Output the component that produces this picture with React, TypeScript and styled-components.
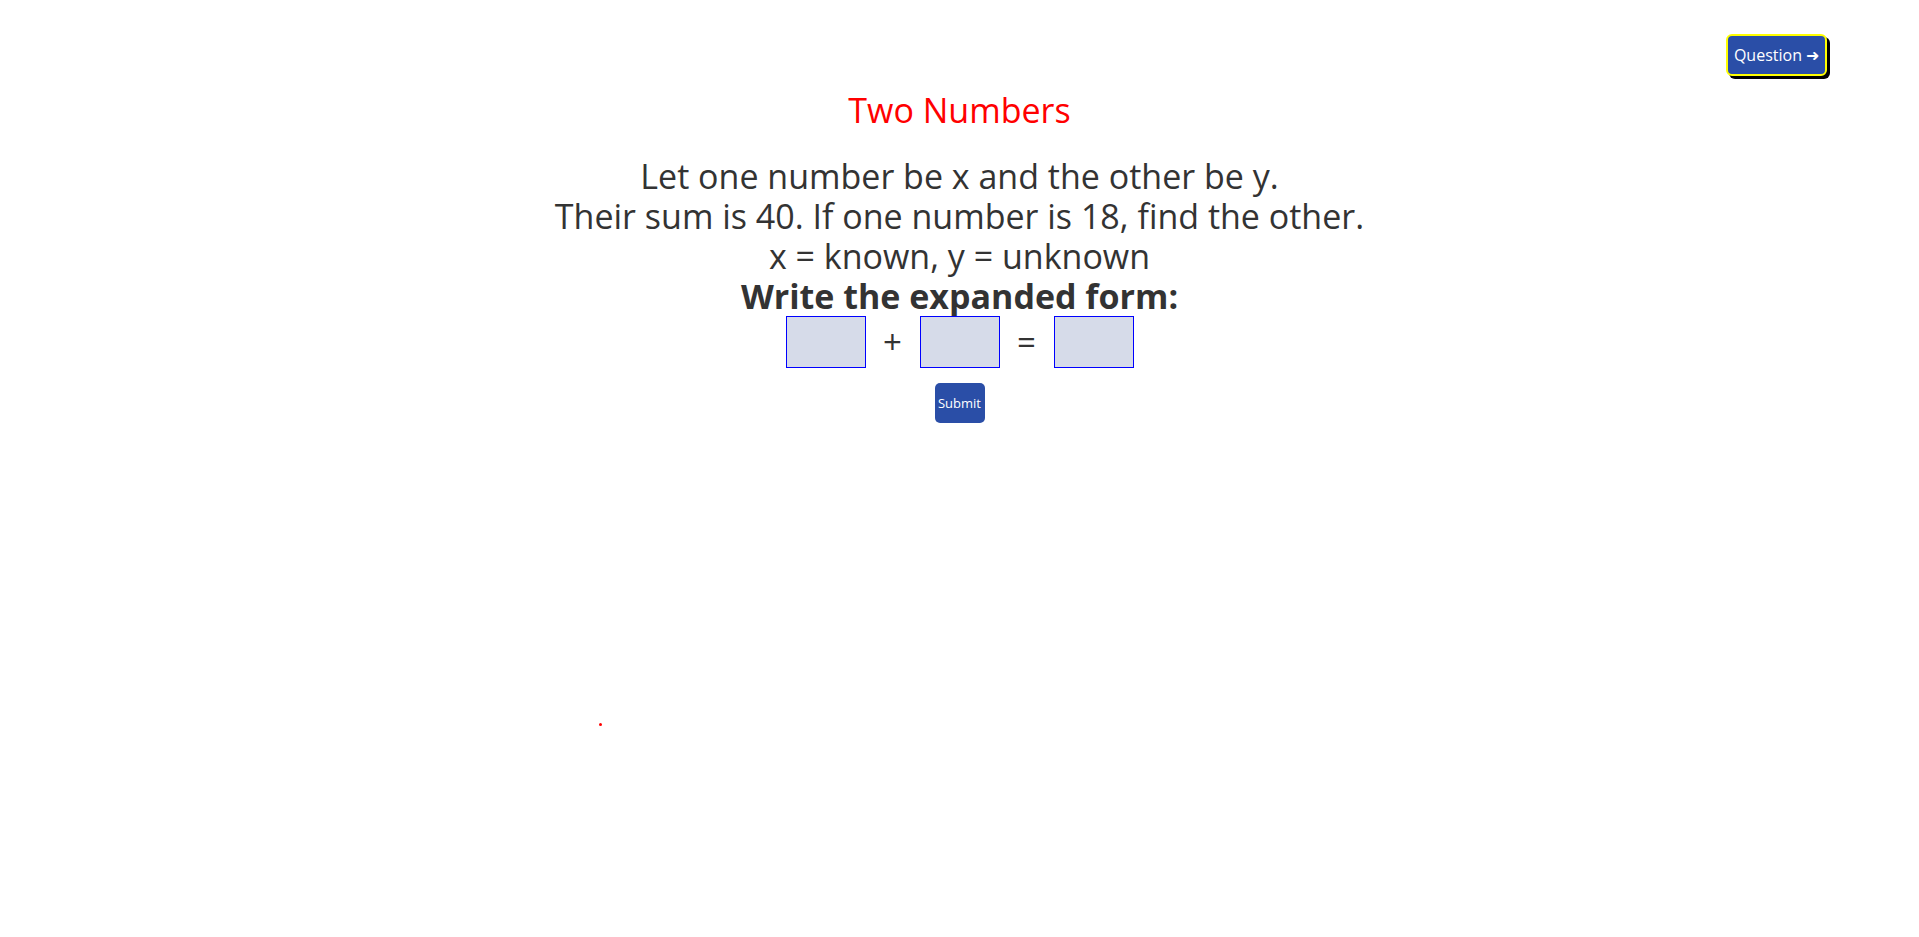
import React, { useState } from "react";
import styled, { createGlobalStyle } from "styled-components";

const GlobalStyle = createGlobalStyle`
  html, body {
    margin: 0;
    padding: 0;
    background: #ffffff;
  }
  body {
    font-family: "Open Sans", "Noto Sans", sans-serif;
    color: #333333;
  }
`;

const Page = styled.div`
  position: relative;
  min-height: 937px;
  display: flex;
  flex-direction: column;
`;

const TopBar = styled.div`
  display: flex;
  justify-content: flex-end;
  padding: 34px 92px 0 0;
`;

const QuestionButton = styled.button`
  font-family: "Open Sans", sans-serif;
  font-size: 16px;
  color: #ffffff;
  background: #2a4ea7;
  border: 2px solid #ffff00;
  border-radius: 6px;
  box-shadow: 3px 3px 0 #000000;
  height: 42px;
  width: 101px;
  padding: 0 4px;
  cursor: pointer;
  white-space: nowrap;
`;

const Content = styled.main`
  display: flex;
  flex-direction: column;
  align-items: center;
  text-align: center;
`;

const Title = styled.h1`
  margin: 14px 0 0;
  font-size: 34px;
  line-height: 40px;
  font-weight: 400;
  color: #ff0000;
`;

const Problem = styled.div`
  margin-top: 26px;
  font-size: 34px;
  line-height: 40px;
`;

const Line = styled.div<{ $bold?: boolean }>`
  font-weight: ${(p) => (p.$bold ? 700 : 400)};
`;

const Equation = styled.div`
  display: flex;
  align-items: center;
`;

const AnswerBox = styled.input`
  box-sizing: border-box;
  width: 80px;
  height: 52px;
  border: 1px solid #0000ff;
  background: #d6dbe9;
  font-family: inherit;
  font-size: 24px;
  text-align: center;
  outline: none;
  padding: 0;
`;

const Operator = styled.span`
  width: 54px;
  text-align: center;
  font-size: 33px;
  line-height: 40px;
`;

const SubmitButton = styled.button`
  margin-top: 15px;
  width: 50px;
  height: 40px;
  padding: 0;
  border: none;
  border-radius: 5px;
  background: #2a4ea7;
  color: #ffffff;
  font-family: "Open Sans", sans-serif;
  font-size: 13px;
  cursor: pointer;
`;

const Dot = styled.span`
  position: absolute;
  left: 599px;
  top: 723px;
  width: 3px;
  height: 3px;
  border-radius: 50%;
  background: #ff0000;
`;

export default function App() {
  const [values, setValues] = useState(["", "", ""]);

  const update = (i: number) => (e: React.ChangeEvent<HTMLInputElement>) => {
    const next = [...values];
    next[i] = e.target.value;
    setValues(next);
  };

  return (
    <>
      <GlobalStyle />
      <Page>
        <TopBar>
          <QuestionButton>Question ➜</QuestionButton>
        </TopBar>
        <Content>
          <Title>Two Numbers</Title>
          <Problem>
            <Line>Let one number be x and the other be y.</Line>
            <Line>Their sum is 40. If one number is 18, find the other.</Line>
            <Line>x = known, y = unknown</Line>
            <Line $bold>Write the expanded form:</Line>
          </Problem>
          <Equation>
            <AnswerBox value={values[0]} onChange={update(0)} />
            <Operator>+</Operator>
            <AnswerBox value={values[1]} onChange={update(1)} />
            <Operator>=</Operator>
            <AnswerBox value={values[2]} onChange={update(2)} />
          </Equation>
          <SubmitButton>Submit</SubmitButton>
        </Content>
        <Dot />
      </Page>
    </>
  );
}
